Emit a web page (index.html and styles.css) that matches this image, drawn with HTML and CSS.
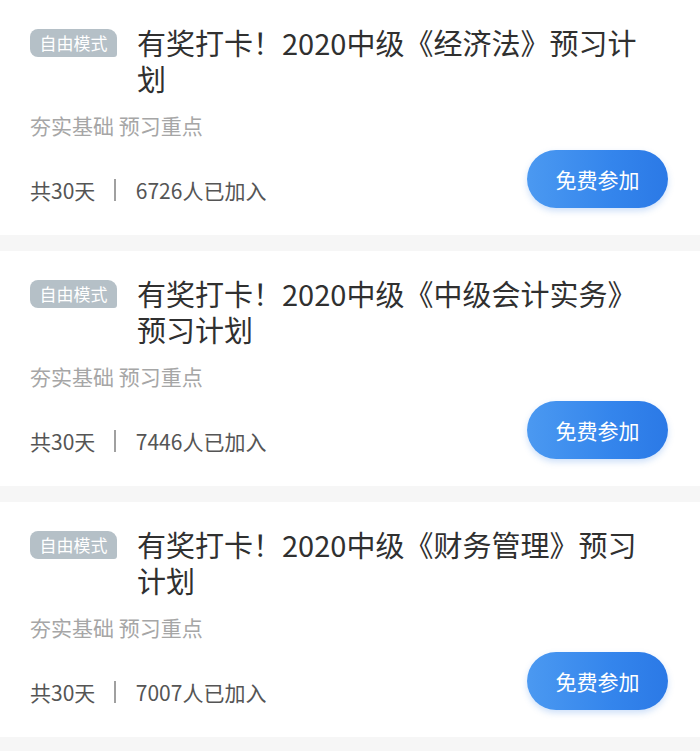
FILE: index.html
```html
<!DOCTYPE html>
<html lang="zh">
<head>
<meta charset="utf-8">
<link rel="stylesheet" href="styles.css">
</head>
<body>
<div class="list">
  <div class="card">
    <div class="head">
      <span class="badge">自由模式</span>
      <div class="title">有奖打卡！2020中级《经济法》预习计划</div>
    </div>
    <div class="sub">夯实基础 预习重点</div>
    <div class="foot">
      <div class="meta"><span>共30天</span><span class="sep"></span><span>6726人已加入</span></div>
      <button class="btn">免费参加</button>
    </div>
  </div>
  <div class="card">
    <div class="head">
      <span class="badge">自由模式</span>
      <div class="title">有奖打卡！2020中级《中级会计实务》预习计划</div>
    </div>
    <div class="sub">夯实基础 预习重点</div>
    <div class="foot">
      <div class="meta"><span>共30天</span><span class="sep"></span><span>7446人已加入</span></div>
      <button class="btn">免费参加</button>
    </div>
  </div>
  <div class="card">
    <div class="head">
      <span class="badge">自由模式</span>
      <div class="title">有奖打卡！2020中级《财务管理》预习计划</div>
    </div>
    <div class="sub">夯实基础 预习重点</div>
    <div class="foot">
      <div class="meta"><span>共30天</span><span class="sep"></span><span>7007人已加入</span></div>
      <button class="btn">免费参加</button>
    </div>
  </div>
</div>
</body>
</html>
```
FILE: styles.css
```css
* { box-sizing: border-box; }
body {
  margin: 0;
  background: #f6f6f6;
  font-family: "Noto Sans CJK SC", "Noto Sans", sans-serif;
}
.list {
  display: flex;
  flex-direction: column;
  gap: 16px;
}
.card {
  background: #fff;
  height: 235px;
  padding: 24px 32px 0 30px;
  display: flex;
  flex-direction: column;
}
.head {
  display: flex;
  align-items: flex-start;
  gap: 20px;
}
.badge {
  flex: none;
  margin-top: 5px;
  width: 87px;
  height: 28px;
  background: #b5c0c7;
  color: #fff;
  font-size: 17px;
  line-height: 28px;
  text-align: center;
  border-radius: 8px 9px 3px 8px;
}
.title {
  font-size: 29px;
  line-height: 36px;
  color: #303030;
  width: 518px;
}
.sub {
  margin-top: 16px;
  font-size: 21px;
  line-height: 26px;
  color: #a6a6a6;
  height: 26px;
}
.foot {
  margin-top: 12px;
  display: flex;
  justify-content: space-between;
  align-items: flex-start;
}
.meta {
  margin-top: 26px;
  display: flex;
  align-items: center;
  font-size: 21px;
  line-height: 28px;
  color: #555;
}
.sep {
  width: 1.5px;
  height: 22px;
  background: #a0a0a0;
  margin: 0 20px 0 19px;
}
.btn {
  width: 141px;
  height: 58px;
  border: none;
  border-radius: 29px;
  background: linear-gradient(90deg, #4b99f1 0%, #3485ec 60%, #2b79e6 100%);
  color: #fff;
  font-family: inherit;
  font-size: 21px;
  box-shadow: 0 3px 6px rgba(60, 130, 230, 0.25);
  padding: 0;
}
```
